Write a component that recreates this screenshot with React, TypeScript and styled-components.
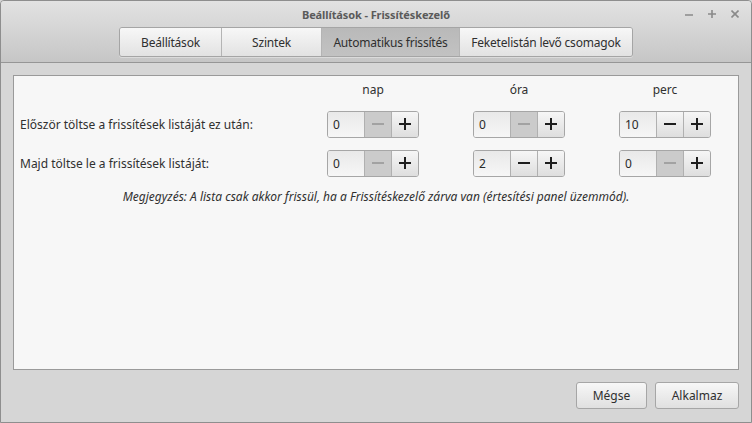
import styled, { createGlobalStyle } from "styled-components";

const GlobalStyle = createGlobalStyle`
  html, body {
    margin: 0;
    padding: 0;
    background: #d6d6d6;
  }
  * {
    box-sizing: border-box;
  }
`;

const Window = styled.div`
  width: 752px;
  height: 423px;
  display: flex;
  flex-direction: column;
  background: #d6d6d6;
  border: 1px solid #8e8e8e;
  border-radius: 4px 4px 0 0;
  overflow: hidden;
  font-family: "Noto Sans", "Open Sans", sans-serif;
  font-size: 12px;
  color: #303030;
`;

const Header = styled.div`
  height: 62px;
  flex: none;
  background: linear-gradient(#e2e2e2, #c6c6c6);
  border-bottom: 1px solid #969696;
  display: flex;
  flex-direction: column;
  align-items: center;
`;

const TitleRow = styled.div`
  position: relative;
  width: 100%;
  height: 26px;
  display: flex;
  align-items: center;
  justify-content: center;
`;

const Title = styled.div`
  font-size: 11px;
  font-weight: bold;
  color: #5a5a5a;
  letter-spacing: -0.1px;
`;

const Controls = styled.div`
  position: absolute;
  right: 12px;
  top: 9px;
  display: flex;
  gap: 15px;
`;

const Tabs = styled.div`
  display: flex;
  height: 30px;
  border: 1px solid #a5a5a5;
  border-radius: 3px;
  overflow: hidden;
  box-shadow: 0 1px 0 rgba(255, 255, 255, 0.35);
`;

const Tab = styled.div<{ $active?: boolean; $w: number }>`
  width: ${(p) => p.$w}px;
  display: flex;
  align-items: center;
  justify-content: center;
  color: #2f2f2f;
  font-size: 12px;
  letter-spacing: -0.2px;
  background: ${(p) =>
    p.$active ? "linear-gradient(#b9b9b9, #c2c2c2)" : "linear-gradient(#f7f7f7, #e2e2e2)"};
  & + & {
    border-left: 1px solid #b4b4b4;
  }
`;

const Body = styled.div`
  flex: 1;
  display: flex;
  flex-direction: column;
  padding: 12px 12px 13px;
  gap: 12px;
`;

const Frame = styled.div`
  flex: 1;
  background: #f7f7f7;
  border: 1px solid #9a9a9a;
  padding: 0 0 0 6px;
`;

const Grid = styled.div`
  display: grid;
  grid-template-columns: 280px 146px 146px 146px;
  grid-template-rows: 22px 26px 26px;
  row-gap: 13px;
  align-items: center;
`;

const ColHead = styled.div`
  text-align: center;
  color: #303030;
  padding-top: 4px;
`;

const RowLabel = styled.div`
  color: #303030;
`;

const Cell = styled.div`
  display: flex;
  justify-content: center;
`;

const Spin = styled.div`
  display: flex;
  width: 92px;
  height: 27px;
  border: 1px solid #a6a6a6;
  border-radius: 3px;
  overflow: hidden;
`;

const Entry = styled.div`
  width: 36px;
  padding-left: 5px;
  display: flex;
  align-items: center;
  background: linear-gradient(#e9e9e9, #f6f6f6);
  color: #2a2a2a;
`;

const SpinBtn = styled.div<{ $disabled?: boolean }>`
  flex: 1;
  display: flex;
  align-items: center;
  justify-content: center;
  border-left: 1px solid #b0b0b0;
  background: ${(p) => (p.$disabled ? "#cbcbcb" : "linear-gradient(#f6f6f6, #dedede)")};
  color: ${(p) => (p.$disabled ? "#a2a2a2" : "#1e1e1e")};
`;

const Note = styled.div`
  text-align: center;
  font-style: italic;
  color: #303030;
  margin-top: 12px;
  padding-right: 6px;
`;

const Footer = styled.div`
  display: flex;
  justify-content: flex-end;
  gap: 8px;
`;

const Button = styled.div<{ $w: number }>`
  width: ${(p) => p.$w}px;
  height: 27px;
  display: flex;
  align-items: center;
  justify-content: center;
  border: 1px solid #a6a6a6;
  border-radius: 3px;
  background: linear-gradient(#f7f7f7, #e0e0e0);
  color: #2f2f2f;
`;

function MinusIcon() {
  return (
    <svg width="12" height="12" viewBox="0 0 12 12">
      <rect x="0" y="5" width="12" height="2" fill="currentColor" />
    </svg>
  );
}

function PlusIcon() {
  return (
    <svg width="12" height="12" viewBox="0 0 12 12">
      <rect x="0" y="5" width="12" height="2" fill="currentColor" />
      <rect x="5" y="0" width="2" height="12" fill="currentColor" />
    </svg>
  );
}

function WinIcon({ kind }: { kind: "min" | "max" | "close" }) {
  return (
    <svg width="8" height="8" viewBox="0 0 8 8" stroke="#8a8a8a" strokeWidth="1.6" fill="none">
      {kind === "min" && <line x1="0" y1="5" x2="8" y2="5" />}
      {kind === "max" && (
        <>
          <line x1="0" y1="4" x2="8" y2="4" />
          <line x1="4" y1="0" x2="4" y2="8" />
        </>
      )}
      {kind === "close" && (
        <>
          <line x1="0.5" y1="0.5" x2="7.5" y2="7.5" />
          <line x1="7.5" y1="0.5" x2="0.5" y2="7.5" />
        </>
      )}
    </svg>
  );
}

function SpinBox({ value }: { value: number }) {
  return (
    <Spin>
      <Entry>{value}</Entry>
      <SpinBtn $disabled={value === 0}>
        <MinusIcon />
      </SpinBtn>
      <SpinBtn>
        <PlusIcon />
      </SpinBtn>
    </Spin>
  );
}

const tabs = [
  { label: "Beállítások", w: 101 },
  { label: "Szintek", w: 100 },
  { label: "Automatikus frissítés", w: 138, active: true },
  { label: "Feketelistán levő csomagok", w: 173 },
];

const rows = [
  { label: "Először töltse a frissítések listáját ez után:", values: [0, 0, 10] },
  { label: "Majd töltse le a frissítések listáját:", values: [0, 2, 0] },
];

export default function App() {
  return (
    <>
      <GlobalStyle />
      <Window>
        <Header>
          <TitleRow>
            <Title>Beállítások - Frissítéskezelő</Title>
            <Controls>
              <WinIcon kind="min" />
              <WinIcon kind="max" />
              <WinIcon kind="close" />
            </Controls>
          </TitleRow>
          <Tabs>
            {tabs.map((t) => (
              <Tab key={t.label} $w={t.w} $active={t.active}>
                {t.label}
              </Tab>
            ))}
          </Tabs>
        </Header>
        <Body>
          <Frame>
            <Grid>
              <div />
              <ColHead>nap</ColHead>
              <ColHead>óra</ColHead>
              <ColHead>perc</ColHead>
              {rows.map((r) => [
                <RowLabel key={r.label}>{r.label}</RowLabel>,
                ...r.values.map((v, i) => (
                  <Cell key={r.label + i}>
                    <SpinBox value={v} />
                  </Cell>
                )),
              ])}
            </Grid>
            <Note>
              Megjegyzés: A lista csak akkor frissül, ha a Frissítéskezelő zárva van (értesítési panel üzemmód).
            </Note>
          </Frame>
          <Footer>
            <Button $w={71}>Mégse</Button>
            <Button $w={84}>Alkalmaz</Button>
          </Footer>
        </Body>
      </Window>
    </>
  );
}
